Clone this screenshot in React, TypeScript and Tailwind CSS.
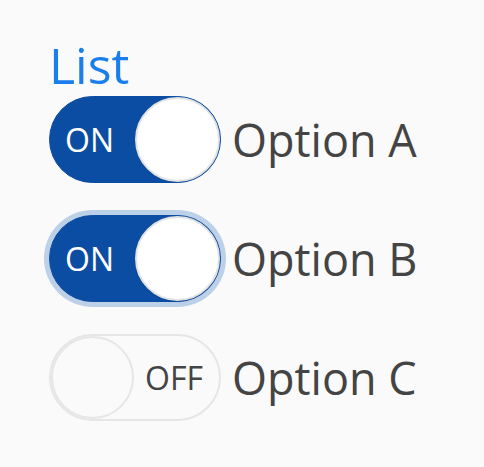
const options = [
  { label: "Option A", on: true, focused: false },
  { label: "Option B", on: true, focused: true },
  { label: "Option C", on: false, focused: false },
];

function Toggle({ on, focused }: { on: boolean; focused: boolean }) {
  return (
    <div
      className={`flex h-[87px] w-[172px] shrink-0 items-center rounded-full ${
        on
          ? "border border-[#0b4da2] bg-[#0b4da2]"
          : "border-2 border-[#e6e6e6] bg-[#fafafa]"
      } ${focused ? "ring-[5px] ring-[#bcd0e8]" : ""}`}
    >
      {on ? (
        <>
          <span className="flex-1 pl-[15px] text-[32px] leading-none text-white">ON</span>
          <span className="h-[85px] w-[85px] rounded-full border-2 border-[#e2e2e2] bg-white shadow-[0_1px_2px_rgba(0,0,0,0.08)]" />
        </>
      ) : (
        <>
          <span className="h-[83px] w-[83px] rounded-full border-2 border-[#e6e6e6] bg-[#fafafa]" />
          <span className="flex-1 pl-[11px] text-[32px] leading-none text-[#444]">OFF</span>
        </>
      )}
    </div>
  );
}

export default function App() {
  return (
    <div className="min-h-screen bg-[#fafafa] pl-[49px] pt-[36px] font-['Open_Sans',sans-serif]">
      <h2 className="text-[50px] leading-[58px] text-[#1a7fea]">List</h2>
      <div className="mt-[2px] flex flex-col gap-[32px]">
        {options.map(({ label, on, focused }) => (
          <div key={label} className="flex items-center gap-[11px]">
            <Toggle on={on} focused={focused} />
            <span className="text-[45px] leading-none text-[#444]">{label}</span>
          </div>
        ))}
      </div>
    </div>
  );
}
